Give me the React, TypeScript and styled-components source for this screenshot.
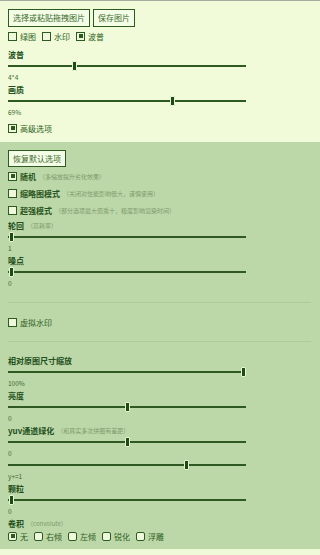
import React from "react";
import styled, { createGlobalStyle } from "styled-components";

const Global = createGlobalStyle`
  html, body { margin: 0; padding: 0; background: #bcd7a8; }
  body { font-family: "Noto Sans CJK SC", "Noto Sans", sans-serif; color: #2f5f24; }
  * { box-sizing: border-box; }
`;

const Page = styled.div`
  width: 320px;
  min-height: 555px;
  display: flex;
  flex-direction: column;
  border-top: 1px solid #a9aca0;
`;

const Section = styled.section<{ $light?: boolean }>`
  background: ${(p) => (p.$light ? "#f1fbd9" : "#bcd7a8")};
  padding: ${(p) => (p.$light ? "8px 8px 8px" : "8px 8px 7px")};
  display: flex;
  flex-direction: column;
`;

const Footer = styled.div`
  flex: 1;
  background: #effbd8;
  min-height: 7px;
`;

const ButtonRow = styled.div`
  display: flex;
  gap: 3px;
`;

const Button = styled.button<{ $h?: number }>`
  height: ${(p) => p.$h ?? 18}px;
  padding: 0 4px;
  border: 1.5px solid #2c5a20;
  background: #f4fde6;
  color: #3c6a2e;
  font-family: inherit;
  font-size: 8px;
  line-height: 1;
  border-radius: 0;
`;

const Row = styled.div<{ $mt?: number }>`
  display: flex;
  align-items: center;
  height: 12px;
  margin-top: ${(p) => p.$mt ?? 0}px;
  gap: 3px;
  font-size: 8px;
`;

const Opt = styled.label`
  display: flex;
  align-items: center;
  gap: 3px;
  margin-right: 3px;
  white-space: nowrap;
`;

const Box = styled.span<{ $on?: boolean; $round?: boolean }>`
  width: 9px;
  height: 9px;
  border: 1.5px solid #2c5a20;
  border-radius: ${(p) => (p.$round ? "2px" : "0")};
  background: #eef9dc;
  display: flex;
  align-items: center;
  justify-content: center;
  flex: none;
  &::after {
    content: "";
    display: ${(p) => (p.$on ? "block" : "none")};
    width: 4px;
    height: 4px;
    background: #2c5a20;
  }
`;

const Note = styled.span`
  font-size: 6px;
  color: #7d9c6d;
  font-weight: normal;
`;

const Strong = styled.span`
  font-weight: bold;
  color: #2a5520;
`;

const Heading = styled.div<{ $mt?: number }>`
  height: 12px;
  line-height: 12px;
  font-size: 8px;
  font-weight: bold;
  color: #23501b;
  margin-top: ${(p) => p.$mt ?? 0}px;
  display: flex;
  align-items: center;
  gap: 3px;
  white-space: nowrap;
`;

const SliderWrap = styled.div`
  height: 10px;
  width: 238px;
  display: flex;
  align-items: center;
`;

const Track = styled.div`
  position: relative;
  width: 100%;
  height: 2px;
  background: #2e5a22;
`;

const Thumb = styled.span`
  position: absolute;
  top: 50%;
  width: 5px;
  height: 10px;
  margin-left: -2.5px;
  margin-top: -5px;
  background: #1e4a16;
  border: 1px solid #e8f6d6;
  border-radius: 1px;
`;

const Value = styled.div`
  height: 12px;
  line-height: 12px;
  font-size: 6.5px;
  color: #3c6a2e;
  margin-bottom: 1px;
`;

const Divider = styled.hr<{ $mt: number; $mb: number }>`
  border: 0;
  height: 1px;
  background: #aecb98;
  width: 303px;
  margin: ${(p) => p.$mt}px 0 ${(p) => p.$mb}px;
`;

const Slider = ({ pct }: { pct: number }) => (
  <SliderWrap>
    <Track>
      <Thumb style={{ left: `${pct}%` }} />
    </Track>
  </SliderWrap>
);

const Check = ({ on, label, note, round }: { on?: boolean; label: string; note?: string; round?: boolean }) => (
  <Opt>
    <Box $on={on} $round={round} />
    {note !== undefined ? <Strong>{label}</Strong> : <span>{label}</span>}
    {note && <Note>{note}</Note>}
  </Opt>
);

export default function App() {
  return (
    <Page>
      <Global />
      <Section $light>
        <ButtonRow>
          <Button>选择或粘贴拖拽图片</Button>
          <Button>保存图片</Button>
        </ButtonRow>
        <Row $mt={3}>
          <Check label="绿图" />
          <Check label="水印" />
          <Check on label="波普" />
        </Row>
        <Heading $mt={7}>波普</Heading>
        <Slider pct={28} />
        <Value>4*4</Value>
        <Heading>画质</Heading>
        <Slider pct={69} />
        <Value>69%</Value>
        <Row $mt={3}>
          <Check on label="高级选项" />
        </Row>
      </Section>
      <Section>
        <ButtonRow>
          <Button $h={17}>恢复默认选项</Button>
        </ButtonRow>
        <Row $mt={3}>
          <Check on label="随机" note="（多缩放提升劣化效果）" />
        </Row>
        <Row $mt={5}>
          <Check label="缩略图模式" note="（关闭对性能影响很大，谨慎使用）" />
        </Row>
        <Row $mt={5}>
          <Check label="超强模式" note="（部分选项最大值乘十，极度影响渲染时间）" />
        </Row>
        <Heading $mt={4}>
          轮回<Note>（高耗率）</Note>
        </Heading>
        <Slider pct={1.5} />
        <Value>1</Value>
        <Heading>噪点</Heading>
        <Slider pct={1.5} />
        <Value>0</Value>
        <Divider $mt={12} $mb={13} />
        <Row>
          <Check label="虚拟水印" />
        </Row>
        <Divider $mt={13} $mb={13} />
        <Heading>相对原图尺寸缩放</Heading>
        <Slider pct={99} />
        <Value>100%</Value>
        <Heading>亮度</Heading>
        <Slider pct={50} />
        <Value>0</Value>
        <Heading>
          yuv通道绿化<Note>（和真实多次拼图有差距）</Note>
        </Heading>
        <Slider pct={50} />
        <Value>0</Value>
        <Slider pct={75} />
        <Value>y+=1</Value>
        <Heading>颗粒</Heading>
        <Slider pct={1.5} />
        <Value>0</Value>
        <Heading>
          卷积<Note>（convolute）</Note>
        </Heading>
        <Row>
          <Check on round label="无" />
          <Check round label="右倾" />
          <Check round label="左倾" />
          <Check round label="锐化" />
          <Check round label="浮雕" />
        </Row>
      </Section>
      <Footer />
    </Page>
  );
}
